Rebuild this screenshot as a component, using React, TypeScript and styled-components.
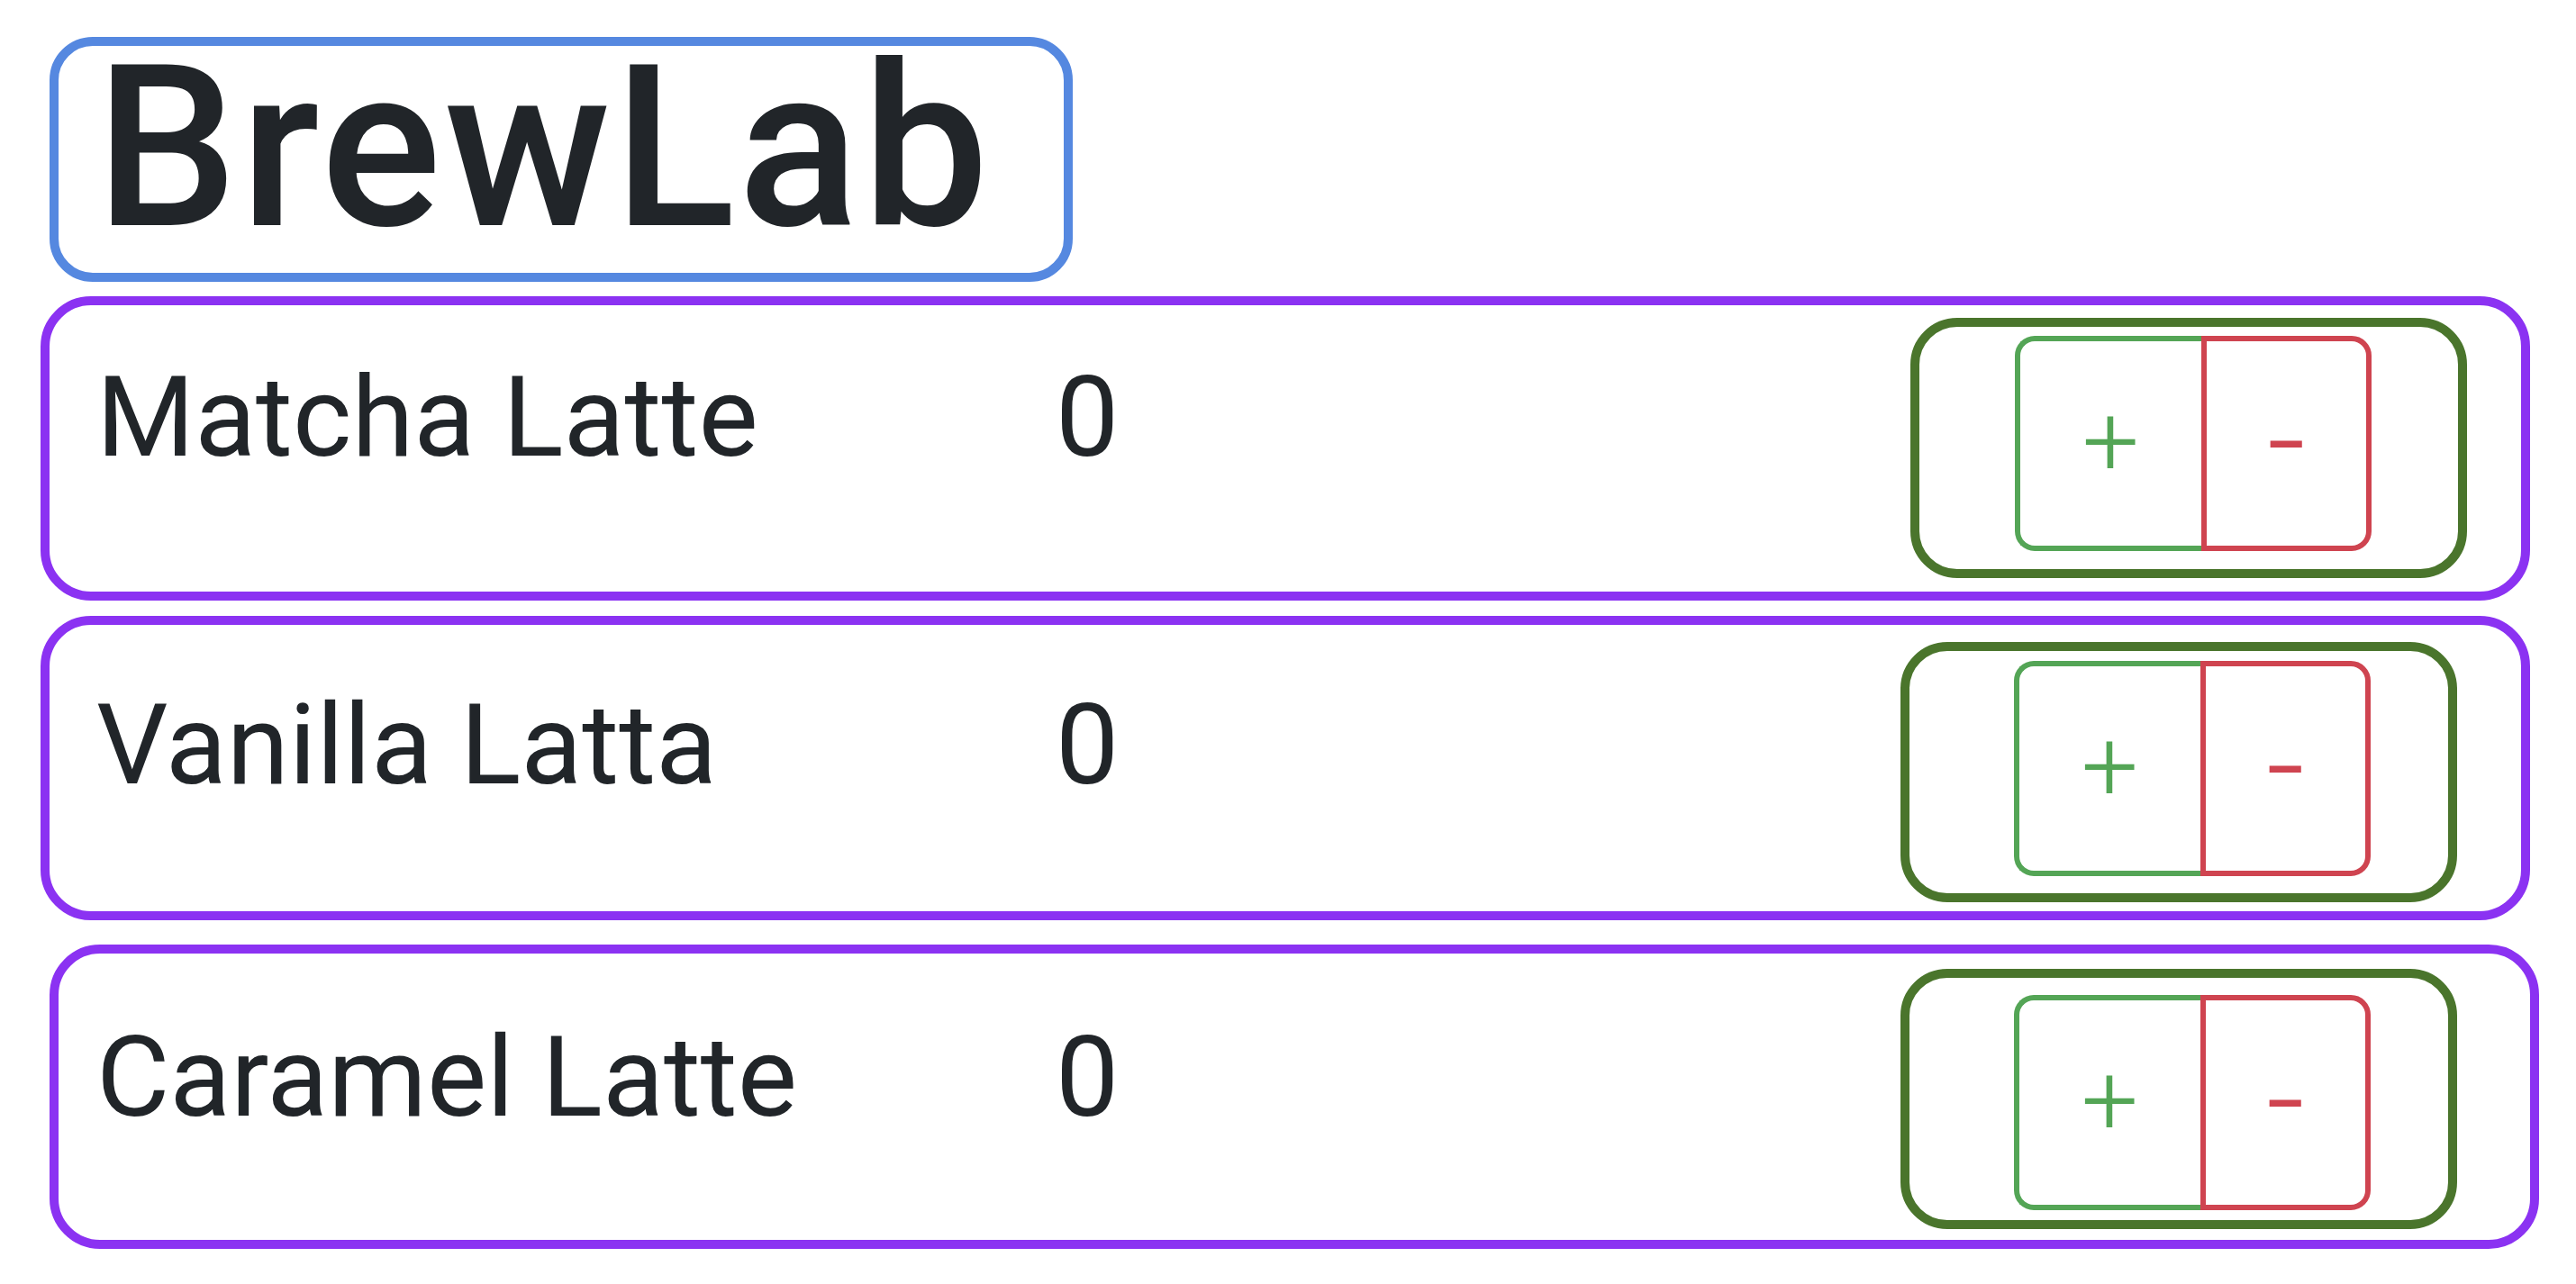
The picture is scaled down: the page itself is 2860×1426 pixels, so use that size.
import React from 'react';
import styled, { createGlobalStyle } from 'styled-components';

const GlobalStyle = createGlobalStyle`
  html, body { margin: 0; padding: 0; background: #ffffff; }
  body { font-family: Roboto, "Liberation Sans", Arial, sans-serif; color: #212529; }
  *, *::before, *::after { box-sizing: border-box; }
`;

const Page = styled.main`
  width: 2860px;
  min-height: 1426px;
  padding-top: 41px;
  display: flex;
  flex-direction: column;
  align-items: flex-start;
`;

const Header = styled.header`
  margin-left: 55px;
  width: 1136px;
  height: 272px;
  border: 10px solid #5588e0;
  border-radius: 48px;
  padding: 14px 0 0 41px;
`;

const Title = styled.h1`
  margin: 0;
  font-size: 250px;
  font-weight: 500;
  line-height: 200px;
  letter-spacing: 3px;
  white-space: nowrap;
`;

const Row = styled.section<{ $shift: number; $gap: number }>`
  margin-top: ${(p) => p.$gap}px;
  margin-left: ${(p) => 45 + p.$shift}px;
  width: 2764px;
  height: 338px;
  border: 10px solid #8b32f2;
  border-radius: 56px;
  padding-left: ${(p) => 52 - p.$shift}px;
  display: flex;
  align-items: flex-start;
`;

const Name = styled.span<{ $top: number }>`
  flex: 0 0 1065px;
  margin-top: ${(p) => p.$top}px;
  font-size: 125px;
  line-height: 1;
  white-space: nowrap;
`;

const Count = styled.span<{ $top: number }>`
  margin-top: ${(p) => p.$top}px;
  font-size: 125px;
  line-height: 1;
`;

const ControlBox = styled.div<{ $top: number; $right: number; $inset: number; $pad: number }>`
  margin: ${(p) => p.$top}px ${(p) => p.$right}px 0 auto;
  width: 618px;
  height: 289px;
  border: 10px solid #4a752c;
  border-radius: 52px;
  padding: ${(p) => p.$pad}px 0 0 ${(p) => p.$inset}px;
  display: flex;
  align-items: flex-start;
`;

const ButtonGroup = styled.div`
  display: flex;
  height: 239px;
`;

const tones = {
  plus: '#54a556',
  minus: '#cf4450',
};

const CounterButton = styled.button<{ $tone: 'plus' | 'minus' }>`
  width: ${(p) => (p.$tone === 'plus' ? 207 : 189)}px;
  height: 100%;
  padding: 0 0 ${(p) => (p.$tone === 'plus' ? 6 : 8)}px;
  background: #ffffff;
  color: ${(p) => tones[p.$tone]};
  border: 6px solid ${(p) => tones[p.$tone]};
  border-right-width: ${(p) => (p.$tone === 'plus' ? 0 : 6)}px;
  border-radius: ${(p) => (p.$tone === 'plus' ? '22px 0 0 22px' : '0 22px 22px 0')};
  font-family: Roboto, "Liberation Sans", Arial, sans-serif;
  font-size: ${(p) => (p.$tone === 'plus' ? 112 : 150)}px;
  font-weight: 300;
  line-height: 1;
  display: flex;
  align-items: center;
  justify-content: center;
  cursor: pointer;
`;

type Drink = {
  name: string;
  count: number;
  shift: number;
  gap: number;
  textTop: number;
  boxTop: number;
  boxRight: number;
  inset: number;
  pad: number;
};

const drinks: Drink[] = [
  { name: 'Matcha Latte', count: 0, shift: 0, gap: 16, textTop: 62, boxTop: 14, boxRight: 60, inset: 106, pad: 10 },
  { name: 'Vanilla Latta', count: 0, shift: 0, gap: 17, textTop: 71, boxTop: 19, boxRight: 71, inset: 116, pad: 11 },
  { name: 'Caramel Latte', count: 0, shift: 10, gap: 27, textTop: 75, boxTop: 17, boxRight: 81, inset: 116, pad: 19 },
];

export default function App() {
  const [counts, setCounts] = React.useState<number[]>(drinks.map((d) => d.count));
  const change = (i: number, delta: number) =>
    setCounts((c) => c.map((v, j) => (j === i ? Math.max(0, v + delta) : v)));

  return (
    <>
      <GlobalStyle />
      <Page>
        <Header>
          <Title>BrewLab</Title>
        </Header>
        {drinks.map((d, i) => (
          <Row key={d.name} $shift={d.shift} $gap={d.gap}>
            <Name $top={d.textTop}>{d.name}</Name>
            <Count $top={d.textTop}>{counts[i]}</Count>
            <ControlBox $top={d.boxTop} $right={d.boxRight} $inset={d.inset} $pad={d.pad}>
              <ButtonGroup>
                <CounterButton $tone="plus" onClick={() => change(i, 1)}>+</CounterButton>
                <CounterButton $tone="minus" onClick={() => change(i, -1)}>-</CounterButton>
              </ButtonGroup>
            </ControlBox>
          </Row>
        ))}
      </Page>
    </>
  );
}
